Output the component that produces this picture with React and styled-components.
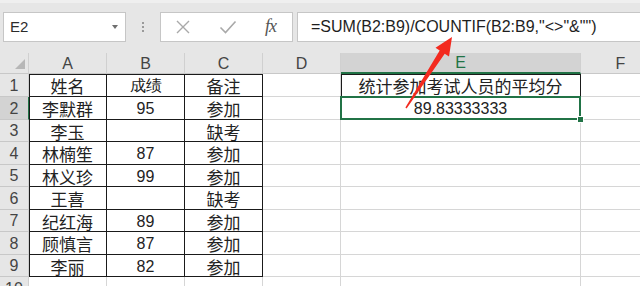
import React from "react";
import styled, { createGlobalStyle } from "styled-components";

const GlobalStyle = createGlobalStyle`
  html, body {
    margin: 0;
    padding: 0;
    background: #ffffff;
    overflow: hidden;
  }
  body {
    font-family: "Liberation Sans", "Noto Sans CJK SC", sans-serif;
  }
`;

const GREEN = "#217346";
const GRID = "#d6d6d6";

const Page = styled.div`
  position: relative;
  width: 640px;
  height: 286px;
  overflow: hidden;
  background: #ffffff;
`;

const Toolbar = styled.div`
  display: flex;
  align-items: center;
  height: 53px;
  padding: 0 0 3px 3px;
  box-sizing: border-box;
  background: #e6e6e6;
  border-top: 3px solid #efefef;
`;

const Box = styled.div`
  display: flex;
  align-items: center;
  height: 30px;
  box-sizing: border-box;
  background: #ffffff;
  border: 1px solid #c6c6c6;
`;

const NameBox = styled(Box)`
  width: 123px;
  padding: 0 7px 0 6px;
  justify-content: space-between;
  font-size: 15px;
  color: #2b2b2b;
`;

const Caret = styled.span`
  width: 0;
  height: 0;
  border-left: 3.5px solid transparent;
  border-right: 3.5px solid transparent;
  border-top: 4px solid #6f6f6f;
  margin-top: 1px;
`;

const Grip = styled.div`
  display: flex;
  flex-direction: column;
  gap: 2px;
  margin: 0 16px 0 16px;
  span {
    width: 2px;
    height: 2px;
    background: #9a9a9a;
  }
`;

const ButtonBox = styled(Box)`
  width: 133px;
  padding: 0 12px 0 14px;
  justify-content: space-between;
  margin-right: 4px;
`;

const Fx = styled.span`
  font-family: "Liberation Serif", serif;
  font-style: italic;
  font-size: 18px;
  color: #555555;
  letter-spacing: -1px;
  margin-right: 4px;
`;

const FormulaBox = styled(Box)`
  flex: 1;
  border-right: none;
  padding-left: 13px;
  font-size: 16px;
  color: #1e1e1e;
  white-space: pre;
`;

const Sheet = styled.div`
  display: grid;
  grid-template-columns: 29px 78px 78px 78px 78px 240px 80px;
  grid-template-rows: 21px 23px 23px 22px 23px 22px 23px 22px 23px 22px 23px;
  font-size: 16px;
  color: #222222;
`;

const Head = styled.div`
  display: flex;
  align-items: center;
  justify-content: center;
  box-sizing: border-box;
  background: ${(p) => (p.$active ? "#d3d3d3" : "#e6e6e6")};
  color: ${(p) => (p.$active && p.$col ? GREEN : "#444444")};
  border-right: 1px solid ${(p) => (p.$active && !p.$col ? GREEN : "#d0d0d0")};
  border-bottom: ${(p) =>
    p.$active && p.$col ? `2px solid ${GREEN}` : `1px solid #c8c8c8`};
  font-size: 16px;
  line-height: 18px;
  padding-top: 1px;
  overflow: hidden;
`;

const Corner = styled(Head)`
  position: relative;
  &::after {
    content: "";
    position: absolute;
    right: 3px;
    bottom: 4px;
    width: 0;
    height: 0;
    border-left: 10px solid transparent;
    border-bottom: 10px solid #b7b7b7;
  }
`;

const Cell = styled.div`
  position: relative;
  display: flex;
  align-items: center;
  justify-content: center;
  box-sizing: border-box;
  padding-top: 2px;
  line-height: 18px;
  white-space: nowrap;
  font-size: ${(p) => (p.$num ? "16px" : "17px")};
  font-family: ${(p) =>
    p.$num ? `"Liberation Sans", sans-serif` : `"Noto Sans CJK SC", sans-serif`};
  border-right: 1px solid ${(p) => (p.$boxed ? "#1a1a1a" : GRID)};
  border-bottom: 1px solid ${(p) => (p.$boxed ? "#1a1a1a" : GRID)};
  box-shadow: ${(p) =>
    [p.$left && "inset 1px 0 0 #1a1a1a", p.$top && "inset 0 1px 0 #1a1a1a"]
      .filter(Boolean)
      .join(", ") || "none"};
`;

const Selected = styled(Cell)`
  &::after {
    content: "";
    position: absolute;
    left: -1px;
    top: -1px;
    right: -1px;
    bottom: -1px;
    border: 2px solid ${GREEN};
    pointer-events: none;
  }
  &::before {
    content: "";
    position: absolute;
    right: -4px;
    bottom: -4px;
    width: 5px;
    height: 5px;
    background: ${GREEN};
    border: 1px solid #ffffff;
    z-index: 2;
  }
`;

const Arrow = styled.svg`
  position: absolute;
  left: 0;
  top: 0;
  pointer-events: none;
`;

const cols = ["A", "B", "C", "D", "E", "F"];

const rows = [
  ["姓名", "成绩", "备注"],
  ["李默群", "95", "参加"],
  ["李玉", "", "缺考"],
  ["林楠笙", "87", "参加"],
  ["林义珍", "99", "参加"],
  ["王喜", "", "缺考"],
  ["纪红海", "89", "参加"],
  ["顾慎言", "87", "参加"],
  ["李丽", "82", "参加"],
  ["", "", ""],
];

const XIcon = () => (
  <svg width="16" height="16" viewBox="0 0 16 16">
    <path d="M2 2 L14 14 M14 2 L2 14" stroke="#a9a9a9" strokeWidth="1.4" fill="none" />
  </svg>
);

const CheckIcon = () => (
  <svg width="18" height="16" viewBox="0 0 18 16">
    <path d="M1.5 8.5 L6.5 13.5 L16.5 2.5" stroke="#a9a9a9" strokeWidth="1.6" fill="none" />
  </svg>
);

export default function App() {
  return (
    <Page>
      <GlobalStyle />
      <Toolbar>
        <NameBox>
          E2
          <Caret />
        </NameBox>
        <Grip>
          <span />
          <span />
          <span />
        </Grip>
        <ButtonBox>
          <XIcon />
          <CheckIcon />
          <Fx>fx</Fx>
        </ButtonBox>
        <FormulaBox>{'=SUM(B2:B9)/COUNTIF(B2:B9,"<>"&"")'}</FormulaBox>
      </Toolbar>
      <Sheet>
        <Corner />
        {cols.map((c) => (
          <Head key={c} $col $active={c === "E"}>
            {c}
          </Head>
        ))}
        {rows.map((r, i) => {
          const n = i + 1;
          const inTable = n <= 9;
          return (
            <React.Fragment key={n}>
              <Head $active={n === 2}>{n}</Head>
              {r.map((v, j) => (
                <Cell
                  key={j}
                  $boxed={inTable}
                  $left={inTable && j === 0}
                  $top={n === 1}
                  $num={j === 1}
                >
                  {v}
                </Cell>
              ))}
              <Cell />
              {n === 1 ? (
                <Cell $boxed $left $top>
                  统计参加考试人员的平均分
                </Cell>
              ) : n === 2 ? (
                <Selected $num>89.83333333</Selected>
              ) : (
                <Cell />
              )}
              <Cell />
            </React.Fragment>
          );
        })}
      </Sheet>
      <Arrow width="640" height="286" viewBox="0 0 640 286">
        <polygon
          points="452,37 449,56.5 444.7,53.7 406.6,108.4 405.4,107.6 439.7,50.5 435.5,47.7"
          fill="#f32a1f"
        />
      </Arrow>
    </Page>
  );
}
